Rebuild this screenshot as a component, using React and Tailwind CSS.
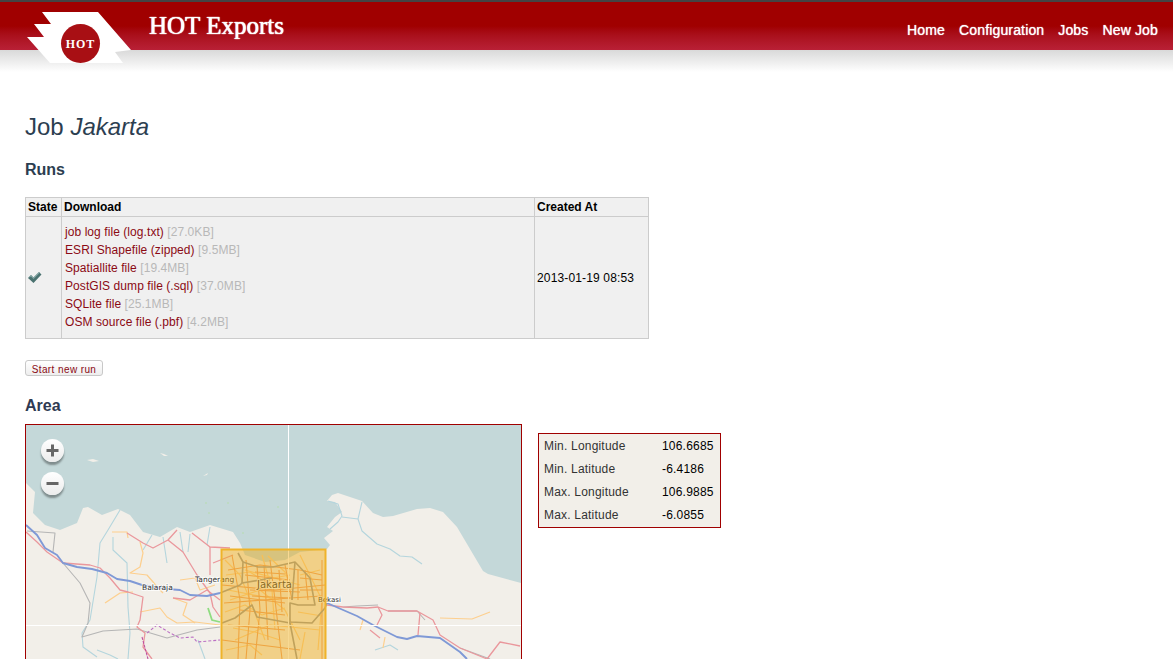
const water = "26,425 521,425 521,583 488,574 483,571 457,527 443,512 430,508 417,509 393,516 383,517 373,513 362,501 338,493 332,495 327,501 335,502 342,512 335,517 327,527 333,531 324,538 330,545 327,549 300,552 285,560 265,562 245,555 240,543 233,532 210,525 190,532 177,527 160,537 143,532 130,515 118,509 102,515 88,507 83,508 77,523 60,530 45,525 33,513 35,492 26,483";

const rivers = [
  "328,501 338,504 342,516 338,522 330,529",
  "342,517 358,519 362,502",
  "358,519 362,531 377,544 390,549 400,556 412,557 422,564",
  "120,510 108,530 100,543 97,577 90,620 82,633 83,647 97,657",
  "113,537 113,550 127,563 128,607 130,633 128,659",
  "152,535 143,550",
  "163,537 167,563",
  "180,532 183,552",
  "190,534 188,552",
  "210,527 207,545",
  "375,650 390,645 398,650",
  "97,650 110,655 118,659",
  "198,640 205,659",
];

const secondary = [
  "112,532 127,532 128,538",
  "140,542 143,553 140,567 130,573 147,575 160,590 163,593",
  "105,603 120,593 133,592",
  "140,612 160,608 167,617 177,623 195,622 220,625",
  "173,598 187,603 183,615 195,623",
  "180,580 195,578 200,590 215,585",
  "440,618 472,619 490,612",
  "363,620 360,630",
  "385,637 383,648",
  "225,560 240,575 250,600 265,640",
  "230,600 260,590 285,610 300,640",
  "262,555 272,590 275,630",
  "300,555 322,600 318,650",
  "235,640 270,625 320,630",
  "245,570 300,585",
  "228,590 280,600",
  "226,575 250,572 262,580 290,575",
  "225,612 245,605 262,615 285,608",
  "233,628 255,632 280,640",
  "268,556 285,572 292,590",
  "300,575 320,570",
  "298,612 322,616",
  "226,650 250,645 262,655",
  "305,632 300,659",
];

const primary = [
  "26,532 37,542 47,552 63,563 90,565 100,568 110,578 120,590 128,592 143,597 140,620 137,627 145,633 143,647 152,659",
  "127,533 143,543 153,548 168,540 177,530",
  "168,540 183,552 197,575 210,593 213,607 220,617",
  "192,533 210,547 230,548",
  "210,547 210,575",
  "213,563 233,555",
  "173,598 190,600 207,590 220,600",
  "327,605 343,607 367,608 378,607 388,611 417,611 433,620 440,635 460,648 487,659",
  "378,607 382,615 377,625",
  "420,613 418,635",
  "370,630 380,638",
  "487,659 500,642 520,646",
];

// roads inside the export box are denser and more saturated
const boxRoads = [
  "228,570 260,565 300,570 322,575",
  "222,585 275,590 325,585",
  "224,603 290,598 322,596",
  "232,555 240,600 238,659",
  "246,560 250,610 246,659",
  "257,565 260,610 255,659",
  "264,565 266,600 268,640",
  "270,560 275,600 282,659",
  "279,570 282,612",
  "285,565 292,600",
  "298,570 298,600",
  "305,570 308,600",
  "222,640 260,645 300,650",
  "245,575 290,580",
  "250,590 300,592",
  "240,610 285,615",
  "230,596 285,603",
  "255,572 285,574",
  "258,582 285,584",
  "252,596 290,598",
  "322,560 322,659",
  "228,625 285,630",
  "300,578 322,580",
  "300,590 322,590",
];

const trunk = [
  "27,531 55,533 53,552",
  "63,563 80,583 90,603 88,623 82,637 103,631 137,629 167,638 197,630 220,627",
  "343,607 357,606 378,605",
  "388,611 417,611 425,620",
  "460,648 490,659",
];

const ring = [
  "220,593 240,585 242,583 243,562 238,553",
  "243,562 258,567 273,567 295,562 310,578 315,605 298,605 290,603 290,622 312,623 325,608 327,603",
  "222,623 235,618 252,605 257,617 290,623 297,659",
  "242,583 272,578",
  "295,562 292,600",
];

const motorway = [
  "26,525 37,535 45,548 57,555 63,563 77,567 92,569 107,573 117,579 130,581 142,585 167,589 180,590 190,595 207,596 220,593",
  "327,603 357,616 373,625 397,637 407,639 417,636 440,638 460,652 467,659",
];

const islands = [
  "87,460 93,459 99,461 93,462",
  "160,453 164,454 168,456 164,456",
  "203,476 208,473 207,475",
];

const specks = [
  [228, 503],
  [209, 513],
  [278, 507],
  [206, 503],
  [243, 533],
];

function Polys({ items, stroke, width, dash }) {
  return items.map((points, i) => (
    <polyline
      key={i}
      points={points}
      fill="none"
      stroke={stroke}
      strokeWidth={width}
      strokeDasharray={dash}
      strokeLinejoin="round"
    />
  ));
}

function MapLabel({ x, y, size = 8, fill = "#333", children }) {
  return (
    <text
      x={x}
      y={y}
      fontSize={size}
      fill={fill}
      stroke="rgba(255,255,255,0.75)"
      strokeWidth="2"
      paintOrder="stroke"
      fontFamily="'DejaVu Sans', sans-serif"
    >
      {children}
    </text>
  );
}

function ZoomButton({ minus }) {
  return (
    <button className="w-[23px] h-[23px] rounded-full bg-gradient-to-b from-white to-[#ececec] shadow-[0_3px_2px_rgba(0,0,0,0.35)] flex items-center justify-center">
      <svg width="13" height="13" viewBox="0 0 13 13">
        <rect x="0.5" y="5" width="12" height="3" fill="#666" />
        {!minus && <rect x="5" y="0.5" width="3" height="12" fill="#666" />}
      </svg>
    </button>
  );
}

function Logo() {
  return (
    <svg className="absolute left-0 top-0" width="140" height="72" viewBox="0 0 140 72">
      <polygon
        points="42,12 98,12 131,50 115,52 123,63 50,63 27,37 44,37 34,24 51,24"
        fill="#fff"
      />
      <circle cx="80.5" cy="43.5" r="19.5" fill="#a80f14" />
      <text
        x="80.5"
        y="48"
        textAnchor="middle"
        fontSize="12"
        fontWeight="bold"
        letterSpacing="1"
        fill="#fff"
        fontFamily="'Liberation Serif', serif"
      >
        HOT
      </text>
    </svg>
  );
}

const downloads = [
  ["job log file (log.txt)", "[27.0KB]"],
  ["ESRI Shapefile (zipped)", "[9.5MB]"],
  ["Spatiallite file", "[19.4MB]"],
  ["PostGIS dump file (.sql)", "[37.0MB]"],
  ["SQLite file", "[25.1MB]"],
  ["OSM source file (.pbf)", "[4.2MB]"],
];

const bounds = [
  ["Min. Longitude", "106.6685"],
  ["Min. Latitude", "-6.4186"],
  ["Max. Longitude", "106.9885"],
  ["Max. Latitude", "-6.0855"],
];

export default function App() {
  return (
    <div className="h-[659px] overflow-hidden bg-white font-['Liberation_Sans',Arial,sans-serif] relative">
      <header className="h-[50px] border-t-2 border-[#444] bg-gradient-to-b from-[#a00000] from-50% to-[#b92036] flex items-center justify-end pr-[15px] pt-[7px]">
        <h1 className="absolute left-[149px] top-[11px] font-['Liberation_Serif',serif] text-[25px] leading-[30px] text-white [text-shadow:0_0_1px_#fff,0_0_1px_#fff]">
          HOT Exports
        </h1>
        <nav className="flex gap-[14px] text-sm tracking-[0.15px] text-white [text-shadow:0_0_1px_#fff]">
          <a href="#">Home</a>
          <a href="#">Configuration</a>
          <a href="#">Jobs</a>
          <a href="#">New Job</a>
        </nav>
      </header>
      <div className="h-[22px] bg-gradient-to-b from-[#d9d9d9] to-white" />
      <Logo />

      <main className="px-[25px]">
        <h2 className="mt-[41px] text-2xl leading-7 text-[#2c3e50]">
          Job <em>Jakarta</em>
        </h2>
        <h3 className="mt-[19px] text-base leading-5 font-bold text-[#2c3e50]">Runs</h3>

        <table className="mt-[17px] w-[624px] table-fixed border-collapse bg-[#f0f0f0] text-xs text-black">
          <thead>
            <tr className="h-[19px] font-bold text-left">
              <th className="w-[36px] border border-[#ccc] px-[2px]">State</th>
              <th className="w-[473px] border border-[#ccc] px-[2px]">Download</th>
              <th className="border border-[#ccc] px-[2px]">Created At</th>
            </tr>
          </thead>
          <tbody>
            <tr>
              <td className="border border-[#ccc] px-[1px]">
                <svg width="15" height="13" viewBox="0 0 15 13">
                  <path d="M1 7 L4 4 L6.5 6.5 L12 1 L14.5 3.5 L6.5 12 Z" fill="#4a7270" />
                  <path d="M1 7 L4 4 L6.5 6.5 L12 1 L12.8 1.8 L6.5 8 L4 5.5 Z" fill="#86a8a6" />
                </svg>
              </td>
              <td className="border border-[#ccc] pl-[3px] pt-[6px] pb-[7px] tracking-[0.07px]">
                {downloads.map(([name, size]) => (
                  <div key={name} className="h-[18px] leading-[18px]">
                    <a href="#" className="text-[#8b0a14]">{name}</a>{" "}
                    <span className="text-[#b8b8b8]">{size}</span>
                  </div>
                ))}
              </td>
              <td className="border border-[#ccc] px-[2px] tracking-[0.15px]">2013-01-19 08:53</td>
            </tr>
          </tbody>
        </table>

        <button className="block mt-[21px] h-[16px] w-[78px] rounded-[3px] border border-[#c8c8c8] bg-gradient-to-b from-white to-[#eee] pt-[2px] text-[10px] leading-[13px] tracking-[0.4px] text-[#8b0a14]">
          Start new run
        </button>

        <h3 className="mt-[20px] text-base leading-5 font-bold text-[#2f3a52]">Area</h3>

        <div className="mt-[8px] flex items-start gap-4">
          <div className="relative w-[497px] h-[300px] border border-[#a00000] shrink-0">
            <svg className="block" width="495" height="298" viewBox="26 425 495 298">
              <rect x="26" y="425" width="495" height="298" fill="#f2efe9" />
              <polygon points={water} fill="#c4d8d9" />
              {islands.map((p) => (
                <polygon key={p} points={p} fill="#f2efe9" />
              ))}
              {specks.map(([x, y]) => (
                <circle key={x} cx={x} cy={y} r="0.8" fill="#b5dca8" />
              ))}
              <g className="blur-[0.4px]">
                <Polys items={rivers} stroke="#b4d5dd" width="1.1" />
                <Polys items={secondary} stroke="#fdcf8e" width="1.2" />
                <Polys items={trunk} stroke="#b5b5b5" width="1.1" />
                <Polys items={primary} stroke="#ea979c" width="1.3" />
                <Polys items={boxRoads} stroke="#ee9f68" width="1.1" />
                <polyline points="147,633 157,625 170,633 180,638 193,637 197,642 220,640" fill="none" stroke="#bb70c4" strokeWidth="1.1" strokeDasharray="3 2" />
                <polyline points="142,637 148,659" fill="none" stroke="#c050a0" strokeWidth="1.1" strokeDasharray="3 1" />
                <polyline points="208,608 212,620 220,622" fill="none" stroke="#8fdc80" strokeWidth="1.8" />
                <Polys items={ring} stroke="#999" width="1.6" />
                <Polys items={motorway} stroke="#7f99d6" width="1.9" />
              </g>
              <line x1="288.5" y1="425" x2="288.5" y2="723" stroke="#fff" />
              <line x1="26" y1="625.5" x2="521" y2="625.5" stroke="#fff" />
              <MapLabel x={142} y={590} size={7.5}>Balaraja</MapLabel>
              <MapLabel x={195} y={582} size={7.5}>Tangerang</MapLabel>
              <MapLabel x={318} y={602} size={7}>Bekasi</MapLabel>
              <MapLabel x={257} y={588} size={10}>Jakarta</MapLabel>
              <rect x="221.5" y="549.5" width="104" height="170" fill="#f0aa10" fillOpacity="0.45" stroke="#efb32a" strokeWidth="2" />
            </svg>
            <div className="absolute left-[15px] top-[14px] flex flex-col gap-[10px]">
              <ZoomButton />
              <ZoomButton minus />
            </div>
          </div>

          <div className="mt-[9px] w-[183px] border border-[#a00000] bg-[#f2efe9] pb-[1px] text-xs">
            <table className="w-full">
              <tbody>
                {bounds.map(([label, value]) => (
                  <tr key={label} className="h-[23px]">
                    <td className="pl-[5px] text-[#333] tracking-[0.2px]">{label}</td>
                    <td className="w-[58px] text-black tracking-[0.2px]">{value}</td>
                  </tr>
                ))}
              </tbody>
            </table>
          </div>
        </div>
      </main>
    </div>
  );
}
